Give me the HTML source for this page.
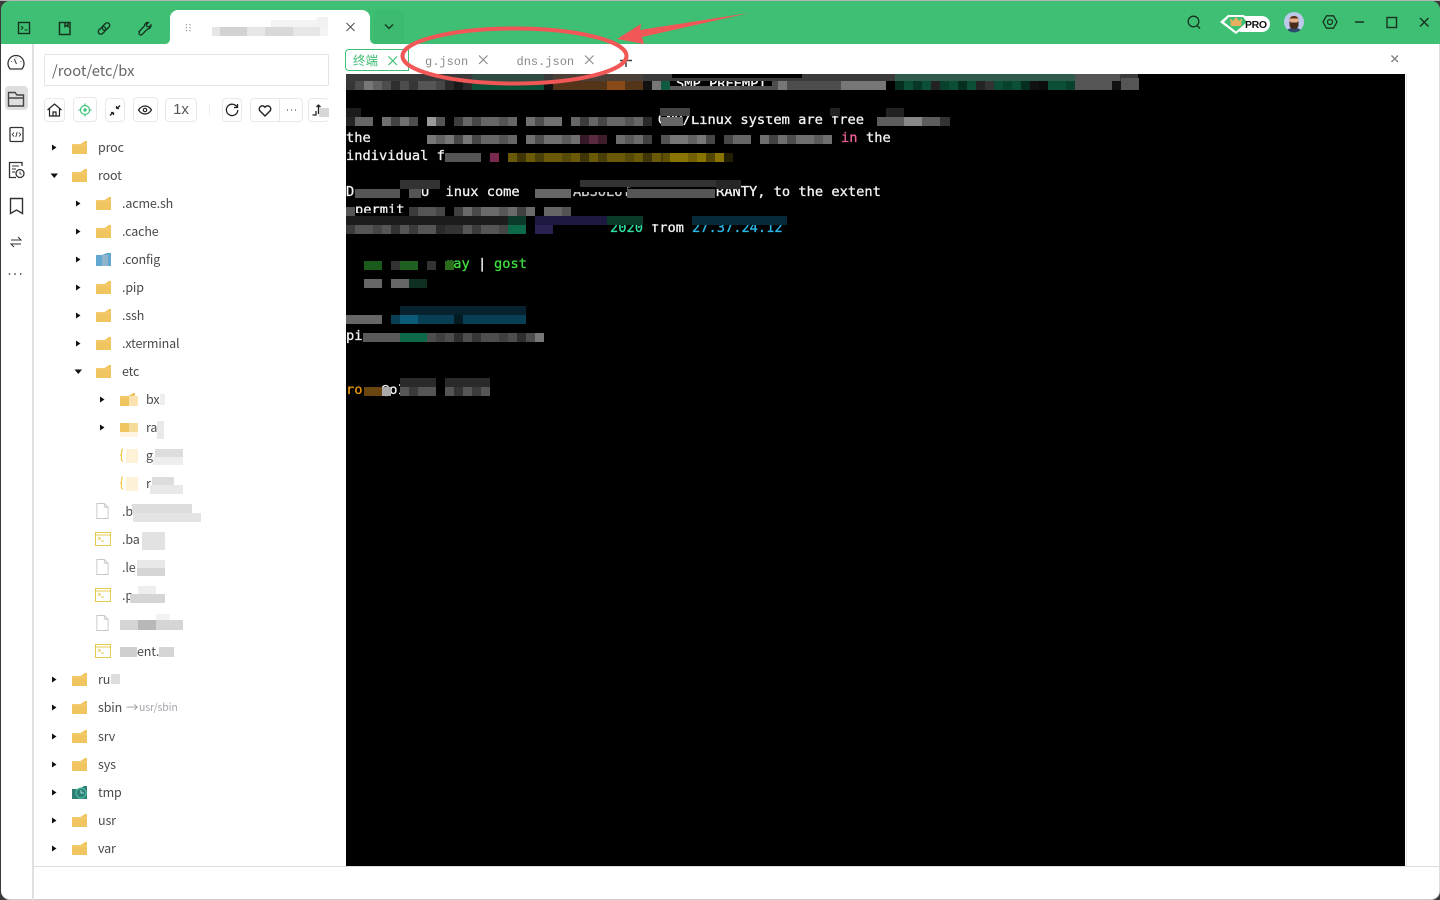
<!DOCTYPE html>
<html lang="zh"><head><meta charset="utf-8"><title>Terminal</title>
<style>
html,body{margin:0;padding:0;width:1440px;height:900px;overflow:hidden;background:#3a3a3a}
*{box-sizing:border-box}
#win{position:absolute;left:1px;top:1px;width:1439px;height:899px;background:#fff;border-radius:9px;overflow:hidden;border-bottom:1px solid #ccc;border-right:1px solid #ddd}
.a{position:absolute}
#page{position:absolute;left:0;top:0;width:1440px;height:900px;font-family:"Noto Sans CJK SC","Liberation Sans",sans-serif}
svg{position:absolute;overflow:visible}
.t{position:absolute;font-size:12.5px;line-height:18px;color:#4a4a4a;white-space:nowrap;letter-spacing:-.15px}
.b{position:absolute;top:98px;height:24px;border:1px solid #e8e8e8;border-radius:4px;background:#fff}
.m{position:absolute;font-family:"DejaVu Sans Mono","Liberation Mono",monospace;font-size:13.7px;line-height:18px;color:#f4f4f4;white-space:pre;overflow:hidden;-webkit-text-stroke:.3px currentColor}
</style></head><body>
<div id="page">
<div id="win"></div>
<!-- header -->
<div class="a" style="left:1px;top:1px;width:1439px;height:43px;background:#3ebf73;border-radius:9px 9px 0 0"></div>
<div class="a" style="left:0;top:0;width:1440px;height:1px;background:#b5b5b5"></div>
<div class="a" style="left:374px;top:10px;width:30px;height:34px;background:#3cba6f;border-radius:6px 6px 0 0"></div>
<div class="a" style="left:170px;top:10px;width:200px;height:34px;background:#fff;border-radius:8px 8px 0 0"></div>
<svg class="a" style="left:165px;top:38px" width="210" height="6"><path d="M0 6C3 6 5 4 5 0V6ZM210 6C207 6 205 4 205 0V6Z" fill="#fff"/></svg>

<!-- header icons -->
<svg style="left:0;top:0" width="420" height="44" fill="none" stroke="#17331f" stroke-width="1.4">
<rect x="18.500" y="22.500" width="11" height="11"/><path d="M21 26l2 1.800-2 1.800M24.500 30h3" stroke-width="1"/>
<path d="M59.500 22.500h10.500v12H59.500zM65 22.500v4l1.500-1 1.500 1v-4" stroke-width="1.500"/>
<g transform="rotate(-45 104 28.500)"><rect x="97" y="26" width="8.500" height="5" rx="2.500"/><rect x="102.500" y="26" width="8.500" height="5" rx="2.500"/></g>
<path d="M139 31.500l5.500-5.500a3.500 3.500 0 0 1 4-3.500l-2 2 .5 2 2 .5 2-2a3.500 3.500 0 0 1-3.500 4l-5.500 5.500a1.500 1.500 0 0 1-2.500-2.500z" stroke-width="1.300"/>
<path d="M186.500 24v1.200M190 24v1.200M186.500 27v1.200M190 27v1.200M186.500 30v1.200M190 30v1.200" stroke="#999" stroke-width="1.200"/>
<path d="M346.500 23l8 8M354.500 23l-8 8" stroke="#555" stroke-width="1.100"/>
<path d="M385 24.500l4 4 4-4" stroke-width="1.300"/>
</svg>
<svg style="left:205px;top:14px" width="130" height="24" shape-rendering="crispEdges">
<rect x="7" y="13" width="116" height="9" fill="#e6e6e6"/><rect x="15" y="13" width="27" height="9" fill="#d2d2d2"/><rect x="60" y="13" width="28" height="9" fill="#d8d8d8"/><rect x="66" y="6" width="57" height="7" fill="#f3f3f3"/><rect x="112" y="3" width="11" height="10" fill="#f1f1f1"/><rect x="115" y="13" width="8" height="9" fill="#f4f4f4"/>
</svg>
<svg style="left:1180px;top:8px" width="260" height="30" fill="none" stroke="#17331f" stroke-width="1.300">
<circle cx="13.500" cy="13.500" r="5.300"/><path d="M17.500 18l2.500 2.500"/>
<path d="M143 14l3.500-6.200h7L157 14l-3.500 6.200h-7z"/><circle cx="150" cy="14" r="2.500"/>
<path d="M175 14h9" stroke-width="1.500"/>
<rect x="207" y="9.500" width="9.500" height="10" stroke-width="1.400"/>
<path d="M240 10l8.500 8.500M248.500 10l-8.500 8.500" stroke-width="1.400"/>
</svg>
<!-- pro badge -->
<svg style="left:1220px;top:13px" width="52" height="22">
<rect x="14" y="3" width="36" height="16" rx="8" fill="#fff"/>
<path d="M8 2h16l6 7-14 12L0 9z" fill="#fff"/><path d="M9 4h14l4 5-11 9.500L4 9z" fill="#3ebf73"/>
<path d="M10 5l3 3 3-4 3 4 3-3-1 8h-10z" fill="#e6b060"/>
<text x="25" y="15" font-family="Liberation Sans" font-weight="700" font-size="10.500" fill="#111" textLength="22">PRO</text>
</svg>
<!-- avatar -->
<svg style="left:1284px;top:12px" width="20" height="20">
<circle cx="10" cy="10" r="10" fill="#bcc9ea"/>
<path d="M3.500 18c2-3 11-3 13 0a10 10 0 0 1-13 0z" fill="#2c4a6e"/>
<path d="M5.500 7c0-4 9-4 9 0v5c0 3-2 4.500-4.500 4.500S5.500 15 5.500 12z" fill="#e7b08a"/>
<path d="M5.500 8c0-5.500 9-5.500 9 0l-.5-1.500H6z" fill="#5b3520"/>
<path d="M5.500 9l1.500 1.500h6l1.500-1.500v4c0 2.500-2 4-4.500 4s-4.500-1.500-4.500-4z" fill="#4a2c1b"/>
</svg>

<!-- left rail -->
<div class="a" style="left:32px;top:44px;width:2px;height:856px;background:#e0e0e0"></div>
<div class="a" style="left:5px;top:86px;width:23px;height:24px;background:#dedede;border-radius:4px"></div>
<svg style="left:0;top:44px" width="33" height="240" fill="none" stroke="#333" stroke-width="1.300">
<path d="M10.200 25A8 8 0 1 1 21.800 25Z"/><path d="M16.500 20l-2.200-5M11.500 17v.8M21 17v.8M16 13.500v.8" stroke-width="1"/>
<path d="M8.500 48.500h6.500l2 2.500h6.500v11h-15zM8.500 54h15" stroke-width="1.400" stroke="#444"/>
<rect x="10" y="83.500" width="13" height="14" rx="1"/><path d="M14 88.500l-1.700 2 1.700 2M19 88.500l1.700 2-1.700 2M17.200 88l-1.400 5" stroke-width=".9"/>
<path d="M22 122v-3.500h-12.500v15h6.500"/><path d="M12 122h7M12 125h4M12 128h3" stroke-width="1"/><circle cx="20" cy="129.500" r="4"/><path d="M20 127.500v2l1.500 1" stroke-width=".9"/>
<path d="M10.500 154.500h12v15l-6-3.500-6 3.500z" stroke-width="1.400"/>
<path d="M11 196h10l-3-3M21 200H11l3 3" stroke-width="1"/>
<circle cx="9.500" cy="230" r=".9" fill="#444" stroke="none"/><circle cx="15" cy="230" r=".9" fill="#444" stroke="none"/><circle cx="20.700" cy="230" r=".9" fill="#444" stroke="none"/>
</svg>

<!-- path input -->
<div class="a" style="left:44px;top:54px;width:285px;height:32px;border:1px solid #e3e3e3;border-radius:2px"></div>
<div class="a" style="left:52px;top:60px;font-size:14.700px;line-height:22px;color:#666">/root/etc/bx</div>

<!-- toolbar -->
<div class="b" style="left:44px;width:21px"></div>
<div class="b" style="left:73px;top:97px;width:24px;height:25px"></div>
<div class="b" style="left:105px;width:20px"></div>
<div class="b" style="left:133px;top:97px;width:25px;height:25px"></div>
<div class="b" style="left:165px;width:32px;color:#555;font:15px/22px 'Liberation Sans',sans-serif;text-align:center">1x</div>
<div class="a" style="left:209px;top:104px;width:1px;height:12px;background:#eee"></div>
<div class="b" style="left:222px;width:20px"></div>
<div class="b" style="left:250px;width:53px"></div>
<div class="a" style="left:279px;top:99px;width:1px;height:22px;background:#e8e8e8"></div>
<div class="b" style="left:308px;width:21px;border-right:0"></div>
<svg style="left:0;top:90px" width="345" height="40" fill="none" stroke="#222" stroke-width="1.200">
<path d="M47.500 20l7-6 7 6M49.500 18.500v7.500h10v-7.500M53 26v-4h3v4"/>
<circle cx="85" cy="20" r="4.500" stroke="#3fc57a"/><circle cx="85" cy="20" r="1.700" fill="#3fc57a" stroke="none"/><path d="M85 13.500v2.500M85 24v2.500M78.500 20H81M89 20h2.500" stroke="#3fc57a"/>
<path d="M110 25.500l3-3M120 15.500l-3 3M113.500 22.500h-2.500M113.500 22.500V25M116.500 18.500h2.500M116.500 18.500V16" stroke-width="1.300"/>
<path d="M138.500 20c2-3 4-4 6.500-4s4.500 1 6.500 4c-2 3-4 4-6.500 4s-4.500-1-6.500-4z"/><circle cx="145" cy="20" r="1.700"/>
<path d="M237 17a5.700 5.700 0 1 0 .8 3M237.500 14v3.500H234" stroke-width="1.300"/>
<path d="M265 26l-5.200-5.200a3 3 0 0 1 5.200-3.600 3 3 0 0 1 5.200 3.600z" stroke-width="1.400"/>
<path d="M287 20h1M291 20h1M295 20h1" stroke="#555"/>
<path d="M316 21v4h-3.500M318.500 24v-9M316.500 17l2-2 2 2" stroke-width="1.300"/>
</svg>
<div class="a" style="left:319px;top:108px;width:10px;height:9px;background:#d6d6d6"></div>

<!-- tree -->
<svg width="0" height="0" style="position:absolute"><defs>
<symbol id="f" viewBox="0 0 15 13"><path d="M0 3h8.500L13 0h2v13H0z" fill="#f0c55f"/><path d="M0 4h15" stroke="#f6d688" stroke-width=".6"/></symbol>
<symbol id="d" viewBox="0 0 13 17"><path d="M.5.500h8l4 4v12H.5zM8.500.500v4h4" fill="#fff" stroke="#c8c8c8"/></symbol>
<symbol id="s" viewBox="0 0 16 14"><rect x=".5" y=".5" width="15" height="13" fill="#fff" stroke="#e5c94c"/><path d="M.5 3h15" stroke="#e5c94c" stroke-width="1"/><path d="M3 5l2.500 1.500L3 8M6 9h3" fill="none" stroke="#e5c94c"/></symbol>
<pattern id="p" x="346" y="0" width="63" height="900" patternUnits="userSpaceOnUse"><rect x="0" y="0" width="9" height="900" fill="#000" fill-opacity=".3"/><rect x="27" y="0" width="9" height="900" fill="#000" fill-opacity=".18"/><rect x="45" y="0" width="9" height="900" fill="#000" fill-opacity=".4"/></pattern>
</defs></svg>
<svg style="left:0;top:0" width="345" height="870" fill="#111">
<path d="M52 144.500l4.500 3-4.500 3zM50.500 173.500h7.500l-3.700 4.500zM76 200.500l4.500 3-4.500 3zM76 228.500l4.500 3-4.500 3zM76 256.500l4.500 3-4.500 3zM76 284.500l4.500 3-4.500 3zM76 312.500l4.500 3-4.500 3zM76 340.500l4.500 3-4.500 3zM74.500 369.500h7.500l-3.700 4.500zM100 396.500l4.500 3-4.500 3zM100 424.500l4.500 3-4.500 3zM52 676.500l4.500 3-4.500 3zM52 704.500l4.500 3-4.500 3zM52 733.500l4.500 3-4.500 3zM52 761.500l4.500 3-4.500 3zM52 789.500l4.500 3-4.500 3zM52 817.500l4.500 3-4.500 3zM52 845.500l4.500 3-4.500 3z"/>
<use href="#f" x="72" y="141" width="15" height="13"/>
<use href="#f" x="72" y="169" width="15" height="13"/>
<use href="#f" x="96" y="197" width="15" height="13"/>
<use href="#f" x="96" y="225" width="15" height="13"/>
<path d="M96 255h6l5-2h4v13H96z" fill="#5fa8cf"/><rect x="102" y="255" width="6" height="11" fill="#8fb4cc"/>
<use href="#f" x="96" y="281" width="15" height="13"/>
<use href="#f" x="96" y="309" width="15" height="13"/>
<use href="#f" x="96" y="337" width="15" height="13"/>
<use href="#f" x="96" y="365" width="15" height="13"/>
<use href="#f" x="120" y="393" width="15" height="13"/>
<rect x="129" y="396" width="9" height="10" fill="#fae3b0"/>
<rect x="120" y="423" width="9" height="9" fill="#f0c55f"/><rect x="129" y="423" width="9" height="9" fill="#f6dc9b"/><rect x="120" y="432" width="18" height="5" fill="#fdf5e2"/>
<path d="M123 449c-2 0-1 3-1.500 5s-1 1-1 1 1.500 0 1 2 0 4 1.500 4M123 477c-2 0-1 3-1.500 5s-1 1-1 1 1.500 0 1 2 0 4 1.500 4" fill="none" stroke="#f4c845" stroke-width="1.200"/>
<rect x="126" y="449" width="12" height="14" fill="#fdf2d8"/><rect x="126" y="477" width="12" height="14" fill="#fdf2d8"/>
<use href="#d" x="96" y="503" width="13" height="16"/>
<use href="#s" x="95" y="532" width="16" height="14"/>
<use href="#d" x="96" y="559" width="13" height="16"/>
<use href="#s" x="95" y="588" width="16" height="14"/>
<use href="#d" x="96" y="615" width="13" height="16"/>
<use href="#s" x="95" y="644" width="16" height="14"/>
<use href="#f" x="72" y="673" width="15" height="13"/>
<use href="#f" x="72" y="701" width="15" height="13"/>
<use href="#f" x="72" y="730" width="15" height="13"/>
<use href="#f" x="72" y="758" width="15" height="13"/>
<path d="M72 789h7l5-3h3v13H72z" fill="#2f7f74"/><circle cx="81" cy="793" r="5" fill="#2f7f74" stroke="#4fc3a8"/><path d="M81 790v3h3" stroke="#bff" stroke-width=".8" fill="none"/>
<use href="#f" x="72" y="814" width="15" height="13"/>
<use href="#f" x="72" y="842" width="15" height="13"/>
</svg>
<div class="t" style="left:98px;top:138px">proc</div>
<div class="t" style="left:98px;top:166px">root</div>
<div class="t" style="left:122px;top:194px">.acme.sh</div>
<div class="t" style="left:122px;top:222px">.cache</div>
<div class="t" style="left:122px;top:250px">.config</div>
<div class="t" style="left:122px;top:278px">.pip</div>
<div class="t" style="left:122px;top:306px">.ssh</div>
<div class="t" style="left:122px;top:334px">.xterminal</div>
<div class="t" style="left:122px;top:362px">etc</div>
<div class="t" style="left:146px;top:390px">bx</div>
<div class="t" style="left:146px;top:418px">ra</div>
<div class="t" style="left:146px;top:446px">g</div>
<div class="t" style="left:146px;top:474px">r</div>
<div class="t" style="left:122px;top:502px">.b</div>
<div class="t" style="left:122px;top:530px">.ba</div>
<div class="t" style="left:122px;top:558px">.le</div>
<div class="t" style="left:122px;top:586px">.p</div>
<div class="t" style="left:137px;top:642px">ent.</div>
<div class="t" style="left:98px;top:670px">ru</div>
<div class="t" style="left:98px;top:698px">sbin</div>
<div class="t" style="left:126px;top:698px;color:#999">→</div>
<div class="t" style="left:139px;top:699px;font-size:10.500px;color:#a5a5ad">usr/sbin</div>
<div class="t" style="left:98px;top:727px">srv</div>
<div class="t" style="left:98px;top:755px">sys</div>
<div class="t" style="left:98px;top:783px">tmp</div>
<div class="t" style="left:98px;top:811px">usr</div>
<div class="t" style="left:98px;top:839px">var</div>
<!-- tree mosaics -->
<svg style="left:0;top:0" width="345" height="870" shape-rendering="crispEdges">
<g fill="#e9e9e9">
<rect x="160" y="394" width="5" height="11" fill="#eee"/>
<rect x="157" y="421" width="7" height="18"/>
<rect x="155" y="449" width="28" height="8" fill="#ddd"/><rect x="153" y="457" width="30" height="8" fill="#eee"/>
<rect x="152" y="477" width="22" height="8" fill="#ddd"/><rect x="150" y="485" width="33" height="9" fill="#e8e8e8"/>
<rect x="132" y="504" width="60" height="9" fill="#ddd"/><rect x="133" y="513" width="68" height="9" fill="#e4e4e4"/>
<rect x="142" y="532" width="23" height="18" fill="#e2e2e2"/>
<rect x="137" y="560" width="28" height="8" fill="#e8e8e8"/><rect x="137" y="568" width="28" height="8" fill="#d5d5d5"/>
<rect x="138" y="586" width="18" height="8" fill="#eee"/><rect x="130" y="594" width="35" height="9" fill="#d5d5d5"/>
<rect x="120" y="620" width="63" height="10" fill="#d5d5d5"/><rect x="138" y="620" width="18" height="10" fill="#b8b8b8"/><rect x="156" y="614" width="14" height="6" fill="#f2f2f2"/>
<rect x="120" y="647" width="17" height="10" fill="#cfcfcf"/><rect x="159" y="647" width="15" height="10" fill="#d5d5d5"/>
<rect x="111" y="674" width="9" height="10" fill="#ddd"/>
</g></svg>

<!-- tab bar -->
<div class="a" style="left:345px;top:49px;width:64px;height:22px;border:1px solid #3ebf73;border-radius:4px 0 0 4px;background:#fff"></div>
<div class="a" style="left:353px;top:51px;font-size:12.500px;line-height:18px;color:#3ebf73">终端</div>
<div class="a" style="left:425px;top:52px;font:12px/18px 'Liberation Mono',monospace;color:#8a8a8a;padding-top:1px">g.json</div>
<div class="a" style="left:516.500px;top:52px;font:12px/18px 'Liberation Mono',monospace;color:#8a8a8a;padding-top:1px">dns.json</div>
<svg style="left:340px;top:44px" width="1070" height="30" fill="none" stroke="#888" stroke-width="1.100">
<path d="M48.500 12.500l8.500 8.500M57 12.500L48.500 21" stroke="#3ebf73" stroke-width="1.200"/>
<path d="M139 11.500l8.500 8.500M147.500 11.500L139 20"/>
<path d="M245 11.500l8.500 8.500M253.500 11.500L245 20"/>
<path d="M280 16.500h12M286 14v9" stroke="#444" stroke-width="1.500"/>
<path d="M1051.500 11.500l6.500 6.500M1058 11.500l-6.500 6.500" stroke="#888" stroke-width="1.500"/>
</svg>

<!-- terminal -->
<div class="a" style="left:346px;top:74px;width:1059px;height:792px;background:#000;overflow:hidden"></div>
<div class="m" style="left:676px;top:75px;height:11px">SMP PREEMPT</div>
<div class="m" style="left:658px;top:111px">GNU/Linux system are free</div>
<div class="m" style="left:346px;top:129px">the</div>
<div class="m" style="left:841px;top:129px;color:#f0609a">in</div>
<div class="m" style="left:866px;top:129px">the</div>
<div class="m" style="left:346px;top:147px">individual f</div>
<div class="m" style="left:346px;top:183px">D</div>
<div class="m" style="left:421px;top:183px">U</div>
<div class="m" style="left:445.500px;top:183px">inux come</div>
<div class="m" style="left:573px;top:183px;color:#ccc">ABSOLUT</div>
<div class="m" style="left:716px;top:183px">RANTY, to the extent</div>
<div class="m" style="left:355px;top:201px;height:12px">permit</div>
<div class="m" style="left:610px;top:219px;color:#2ee0a0">2020</div>
<div class="m" style="left:651px;top:219px">from</div>
<div class="m" style="left:692px;top:219px;color:#2bb8e8">27.37.24.12</div>
<div class="m" style="left:445px;top:255px;color:#3fe03f">ray</div>
<div class="m" style="left:478px;top:255px">|</div>
<div class="m" style="left:494px;top:255px;color:#3fe03f">gost</div>
<div class="m" style="left:506px;top:309px;color:#2bb8e8;font-size:11px">18</div>
<div class="m" style="left:346px;top:327px">pi</div>
<div class="m" style="left:346px;top:381px;color:#e8960c">ro</div>
<div class="m" style="left:381px;top:381px">@o1</div>
<svg style="left:0;top:0" width="1440" height="900" shape-rendering="crispEdges">
<rect x="346" y="74" width="792" height="7" fill="#3a3a3a"/>
<rect x="672" y="74" width="130" height="4" fill="#000"/>
<rect x="346" y="81" width="120" height="9" fill="#4d4d4d"/><rect x="364" y="81" width="18" height="9" fill="#777"/><rect x="418" y="81" width="27" height="9" fill="#555"/><rect x="445" y="81" width="27" height="9" fill="#2a2a2a"/>
<rect x="472" y="81" width="72" height="9" fill="#0a5138"/><rect x="472" y="74" width="72" height="7" fill="#2f4a40"/>
<rect x="544" y="81" width="9" height="9" fill="#111"/><rect x="553" y="81" width="90" height="9" fill="#55351a"/><rect x="607" y="81" width="18" height="9" fill="#8a4a18"/><rect x="553" y="74" width="90" height="7" fill="#4a4038"/>
<rect x="643" y="81" width="9" height="9" fill="#111"/><rect x="652" y="81" width="9" height="9" fill="#777"/><rect x="661" y="81" width="9" height="9" fill="#0f5a40"/><rect x="670" y="86" width="70" height="4" fill="#5a5a5a"/>
<rect x="740" y="86" width="32" height="4" fill="#4d4d4d"/><rect x="772" y="81" width="113" height="9" fill="#4d4d4d"/><rect x="778" y="81" width="9" height="9" fill="#777"/><rect x="841" y="81" width="45" height="9" fill="#777"/>
<rect x="895" y="81" width="180" height="9" fill="#0a4f36"/><rect x="895" y="74" width="180" height="7" fill="#2f5a4c"/><rect x="931" y="81" width="9" height="9" fill="#222"/><rect x="976" y="81" width="18" height="9" fill="#333"/><rect x="1030" y="81" width="18" height="9" fill="#111"/>
<rect x="1075" y="74" width="45" height="16" fill="#555"/><rect x="1112" y="81" width="9" height="9" fill="#111"/><rect x="1121" y="78" width="18" height="12" fill="#555"/>
<rect x="660" y="108" width="220" height="8" fill="#000"/>
<rect x="346" y="108" width="15" height="9" fill="#1c1c1c"/><rect x="660" y="108" width="30" height="8" fill="#444"/><rect x="830" y="108" width="10" height="8" fill="#222"/><rect x="886" y="108" width="18" height="9" fill="#222"/>
<rect x="346" y="117" width="9" height="9" fill="#333"/><rect x="355" y="117" width="18" height="9" fill="#666"/><rect x="382" y="117" width="36" height="9" fill="#707070"/><rect x="427" y="117" width="9" height="9" fill="#999"/><rect x="436" y="117" width="9" height="9" fill="#666"/>
<rect x="454" y="117" width="63" height="9" fill="#666"/><rect x="526" y="117" width="36" height="9" fill="#707070"/><rect x="571" y="117" width="72" height="9" fill="#666"/><rect x="643" y="117" width="9" height="9" fill="#444"/><rect x="661" y="117" width="22" height="9" fill="#666"/>
<rect x="877" y="117" width="73" height="9" fill="#5d5d5d"/><rect x="904" y="117" width="18" height="9" fill="#888"/><rect x="940" y="117" width="10" height="9" fill="#333"/>
<rect x="427" y="135" width="45" height="9" fill="#777"/><rect x="472" y="135" width="45" height="9" fill="#666"/><rect x="526" y="135" width="54" height="9" fill="#707070"/><rect x="580" y="135" width="27" height="9" fill="#5a2a40"/><rect x="616" y="135" width="36" height="9" fill="#6c6c6c"/><rect x="661" y="135" width="54" height="9" fill="#777"/><rect x="724" y="135" width="27" height="9" fill="#666"/><rect x="760" y="135" width="72" height="9" fill="#6e6e6e"/>
<rect x="445" y="153" width="36" height="9" fill="#555"/><rect x="490" y="153" width="9" height="9" fill="#7a2a50"/><rect x="508" y="153" width="155" height="9" fill="#6a5a08"/><rect x="663" y="153" width="61" height="9" fill="#8a7400"/><rect x="724" y="153" width="9" height="9" fill="#221f00"/>
<rect x="400" y="180" width="40" height="9" fill="#333"/><rect x="573" y="180" width="54" height="12" fill="#000"/><rect x="580" y="180" width="47" height="7" fill="#333"/><rect x="627" y="180" width="89" height="7" fill="#333"/><rect x="716" y="180" width="25" height="9" fill="#262626"/>
<rect x="355" y="189" width="45" height="9" fill="#555"/><rect x="409" y="189" width="12" height="9" fill="#555"/><rect x="535" y="189" width="36" height="9" fill="#666"/><rect x="627" y="189" width="88" height="9" fill="#555"/>
<rect x="346" y="207" width="9" height="9" fill="#555"/><rect x="409" y="207" width="36" height="9" fill="#555"/><rect x="454" y="207" width="81" height="9" fill="#6a6a6a"/><rect x="544" y="207" width="27" height="9" fill="#666"/>
<rect x="346" y="216" width="180" height="9" fill="#1c1c1c"/><rect x="508" y="216" width="18" height="9" fill="#0b3a2a"/><rect x="535" y="216" width="72" height="9" fill="#1d1840"/><rect x="607" y="216" width="36" height="9" fill="#0a3a28"/><rect x="643" y="216" width="49" height="8" fill="#000"/><rect x="692" y="216" width="95" height="9" fill="#062a3a"/>
<rect x="346" y="225" width="162" height="9" fill="#555"/><rect x="436" y="225" width="18" height="9" fill="#333"/><rect x="508" y="225" width="18" height="9" fill="#0c6a48"/><rect x="535" y="225" width="18" height="9" fill="#2a2250"/>
<rect x="364" y="261" width="18" height="9" fill="#1a5a1a"/><rect x="391" y="261" width="9" height="9" fill="#333"/><rect x="400" y="261" width="18" height="9" fill="#1f5f1f"/><rect x="427" y="261" width="9" height="9" fill="#333"/><rect x="445" y="261" width="9" height="9" fill="#2a6a1a"/>
<rect x="364" y="279" width="18" height="9" fill="#666"/><rect x="391" y="279" width="18" height="9" fill="#666"/><rect x="409" y="279" width="18" height="9" fill="#0f2f20"/>
<rect x="400" y="306" width="126" height="9" fill="#05222e"/>
<rect x="346" y="315" width="36" height="9" fill="#666"/><rect x="391" y="315" width="135" height="9" fill="#083f55"/><rect x="400" y="315" width="18" height="9" fill="#0a5a78"/><rect x="454" y="315" width="9" height="9" fill="#031a22"/>
<rect x="363" y="333" width="37" height="9" fill="#5a5a5a"/><rect x="400" y="333" width="27" height="9" fill="#0c6a48"/><rect x="427" y="333" width="108" height="9" fill="#4d4d4d"/><rect x="535" y="333" width="9" height="9" fill="#777"/>
<rect x="400" y="378" width="36" height="9" fill="#2a2a2a"/><rect x="445" y="378" width="45" height="9" fill="#2a2a2a"/>
<rect x="364" y="387" width="18" height="9" fill="#6a4510"/><rect x="382" y="387" width="9" height="9" fill="#aaa"/><rect x="400" y="387" width="36" height="9" fill="#555"/><rect x="445" y="387" width="45" height="9" fill="#555"/>
<g fill="url(#p)">
<rect x="346" y="81" width="126" height="9"/><rect x="895" y="81" width="180" height="9"/>
<rect x="346" y="117" width="315" height="9"/><rect x="427" y="135" width="405" height="9"/>
<rect x="508" y="153" width="216" height="9"/><rect x="409" y="207" width="162" height="9"/>
<rect x="346" y="225" width="162" height="9"/><rect x="427" y="333" width="108" height="9"/><rect x="400" y="387" width="90" height="9"/>
</g>
</svg>

<!-- lines -->
<div class="a" style="left:33px;top:866px;width:1406px;height:1px;background:#ddd"></div>
<div class="a" style="left:1406px;top:74px;width:1px;height:792px;background:#e8e8e8"></div>

<!-- annotation -->
<svg style="left:0;top:0" width="1440" height="120">
<ellipse cx="514.500" cy="56" rx="112" ry="27.500" fill="none" stroke="#f25757" stroke-width="4"/>
<path d="M749 13L640 30l1-6-24 15 27 5-2-7z" fill="#f25757"/>
</svg>
</div>
</body></html>
